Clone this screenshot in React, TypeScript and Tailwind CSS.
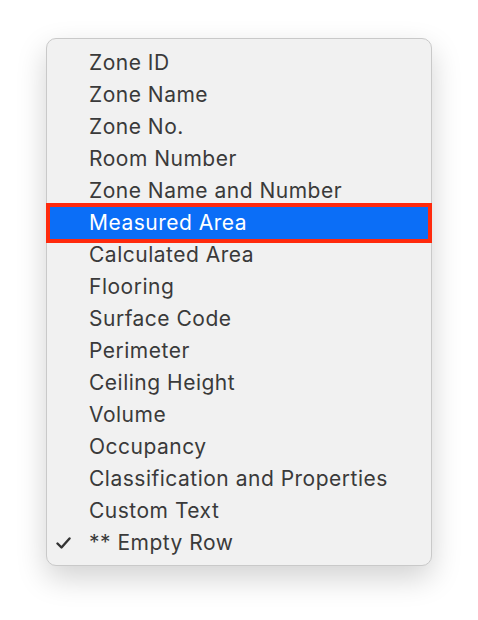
const items = [
  "Zone ID",
  "Zone Name",
  "Zone No.",
  "Room Number",
  "Zone Name and Number",
  "Measured Area",
  "Calculated Area",
  "Flooring",
  "Surface Code",
  "Perimeter",
  "Ceiling Height",
  "Volume",
  "Occupancy",
  "Classification and Properties",
  "Custom Text",
  "** Empty Row",
];

export default function App() {
  return (
    <div className="w-[478px] h-[620px] bg-white pt-[38px] pl-[46px]" style={{ fontFamily: "Inter, 'Liberation Sans', sans-serif" }}>
      <div className="w-[386px] rounded-[10px] border border-[#c9c9c9] bg-[#f1f1f1] pt-[8px] pb-[6px] shadow-[0_12px_30px_rgba(0,0,0,0.18)]">
        {items.map((label) => {
          const selected = label === "Measured Area";
          const checked = label === "** Empty Row";
          return (
            <div
              key={label}
              className={
                selected
                  ? "mx-[3px] flex h-8 items-center bg-[#0b6ef7] pl-[39px] text-[21px] tracking-[0.5px] text-white outline-4 outline-[#ff2a0d]"
                  : "mx-[3px] flex h-8 items-center pl-[39px] text-[21px] tracking-[0.5px] text-[#3a3a3a]"
              }
            >
              {checked && (
                <svg className="-ml-[33px] mr-[18px]" width="15" height="12" viewBox="0 0 15 12">
                  <path d="M1.5 6.5 L5.5 10.5 L13.5 1.5" fill="none" stroke="#333333" strokeWidth="2.4" strokeLinecap="round" strokeLinejoin="round" />
                </svg>
              )}
              <span>{label}</span>
            </div>
          );
        })}
      </div>
    </div>
  );
}
